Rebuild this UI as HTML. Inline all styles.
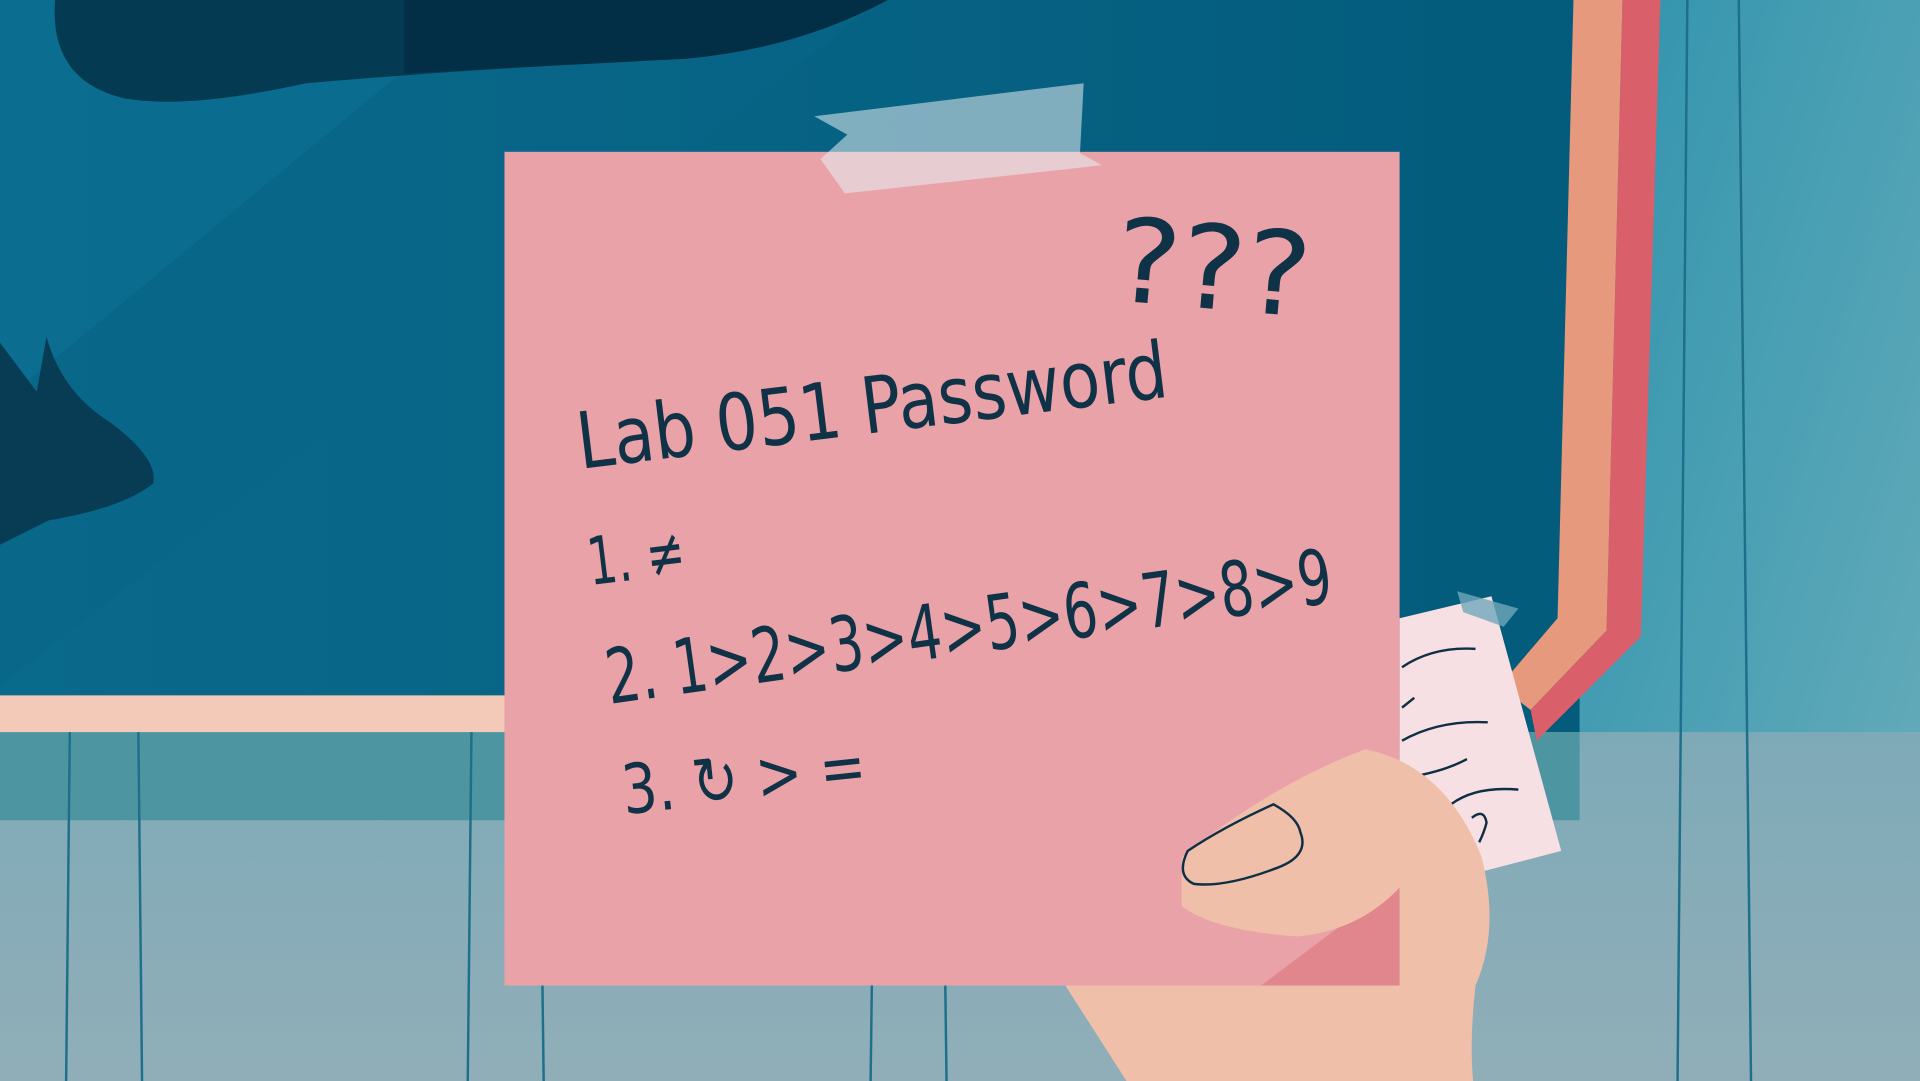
<!DOCTYPE html>
<html><head><meta charset="utf-8"><style>
html,body{margin:0;padding:0;width:1920px;height:1081px;overflow:hidden;background:#06607f}
svg{display:block}
</style></head><body>
<svg width="1920" height="1081" viewBox="0 0 1568 883" preserveAspectRatio="none" xmlns="http://www.w3.org/2000/svg">
<defs>
<linearGradient id="bg" x1="0" y1="0" x2="1" y2="0">
<stop offset="0" stop-color="#0a6a8c"/><stop offset="1" stop-color="#025878"/></linearGradient>
<linearGradient id="rt" x1="0" y1="0" x2="1" y2="1">
<stop offset="0" stop-color="#2f93ad"/><stop offset="1" stop-color="#6aaebb"/></linearGradient>
<linearGradient id="wall" x1="0" y1="0" x2="0" y2="1">
<stop offset="0" stop-color="#7eaab8"/><stop offset="1" stop-color="#90aeb8"/></linearGradient>
</defs>
<rect width="1568" height="883" fill="url(#bg)"/>
<polygon points="0,0 400,0 0,330" fill="#0b6f92" opacity="0.6"/>
<polygon points="0,330 400,0 720,0 0,560" fill="#076688" opacity="0.5"/>
<rect x="1290" y="0" width="278" height="883" fill="url(#rt)"/>
<path d="M45,0 L725,0 Q650,40 560,48 Q400,55 250,68 Q150,90 100,80 Q40,65 45,0Z" fill="#053a53"/>
<path d="M330,0 L725,0 Q650,40 560,48 L330,60Z" fill="#022f46"/>
<path d="M0,280 L30,320 L38,275 Q50,320 90,345 Q130,375 125,395 Q100,415 40,425 L0,445Z" fill="#073c54"/>
<rect x="0" y="598" width="1568" height="285" fill="url(#wall)"/>
<rect x="0" y="598" width="1290" height="72" fill="#4e95a2"/>
<rect x="0" y="568" width="412" height="30" fill="#f3c9b8"/>
<polygon points="1285,0 1325,0 1312,515 1250,580 1225,560 1272,505" fill="#e6997c"/>
<polygon points="1325,0 1356,0 1340,520 1255,605 1250,580 1312,515" fill="#d9606a"/>
<g stroke="#1d6f8a" stroke-width="2">
<line x1="57" y1="598" x2="54" y2="883"/><line x1="113" y1="598" x2="116" y2="883"/>
<line x1="385" y1="598" x2="382" y2="883"/><line x1="443" y1="805" x2="444" y2="883"/>
<line x1="712" y1="805" x2="711" y2="883"/><line x1="772" y1="805" x2="773" y2="883"/>
<line x1="1378" y1="0" x2="1370" y2="883"/><line x1="1420" y1="0" x2="1430" y2="883"/>
</g>
<polygon points="1143,505 1218,487 1275,695 1210,712 1143,720" fill="#f7e0e3"/>
<polygon points="1190,483 1240,497 1228,512 1195,500" fill="#6fa7ba" opacity="0.8"/>
<g fill="none" stroke="#0f2f45" stroke-width="2">
<path d="M1145,545 Q1170,528 1205,530"/><path d="M1145,578 L1155,570"/>
<path d="M1145,605 Q1175,588 1215,590"/><path d="M1150,635 Q1180,630 1198,620"/>
<path d="M1185,657 Q1205,642 1240,645"/><path d="M1202,668 Q1212,660 1214,672 Q1212,680 1208,688"/>
</g>
<path d="M870,805 L1205,805 Q1200,850 1203,883 L920,883Z" fill="#efbfaa"/>
<rect x="412" y="124" width="731" height="681" fill="#e8a2a8"/>
<polygon points="1143,720 1143,805 1030,805" fill="#e0868c"/>
<polygon points="665,95 885,68 882,125 900,135 690,158 670,130 692,110" fill="#e6eef2" opacity="0.55"/>
<path d="M965,700 Q1040,640 1115,612 Q1180,625 1210,700 Q1225,760 1205,805 L1143,805 L1143,725 Q1110,760 1060,765 Q990,760 965,740Z" fill="#efbfaa"/>
<path d="M1040,657 Q1060,668 1062,680 Q1070,700 1040,710 Q1000,725 975,722 Q960,715 970,695 Q1000,675 1040,657Z" fill="none" stroke="#0f2f45" stroke-width="2"/>
<g fill="#0f3247" font-family="DejaVu Sans Condensed, DejaVu Sans, Liberation Sans, sans-serif" font-weight="200">
<text x="908" y="245" font-size="95" transform="rotate(5 908 245)" textLength="160" lengthAdjust="spacingAndGlyphs">???</text>
<text x="474" y="383" font-size="64" transform="rotate(-7 474 383)" textLength="485" lengthAdjust="spacingAndGlyphs">Lab 051 Password</text>
<text x="482" y="478" font-size="54" transform="rotate(-7 482 478)" textLength="80" lengthAdjust="spacingAndGlyphs">1. ≠</text>
<text x="498" y="575" font-size="62" transform="rotate(-8 498 575)" textLength="598" lengthAdjust="spacingAndGlyphs">2. 1&gt;2&gt;3&gt;4&gt;5&gt;6&gt;7&gt;8&gt;9</text>
<text x="510" y="665" font-size="56" transform="rotate(-6 510 665)" textLength="200" lengthAdjust="spacingAndGlyphs">3. ↻ &gt; =</text>
</g>
</svg>
</body></html>
